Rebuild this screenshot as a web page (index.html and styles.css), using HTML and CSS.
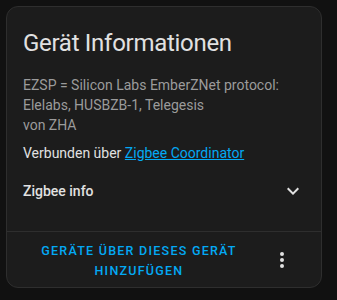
FILE: index.html
```html
<!DOCTYPE html>
<html lang="de">
<head>
  <meta charset="UTF-8">
  <meta name="viewport" content="width=device-width, initial-scale=1.0">
  <link rel="stylesheet" href="styles.css">
  <title>Gerät Informationen</title>
</head>
<body>
  <div class="card">
    <h1 class="card-header">Gerät Informationen</h1>

    <div class="card-content">
      <div class="model">EZSP = Silicon Labs EmberZNet protocol: Elelabs, HUSBZB-1, Telegesis</div>
      <div class="manuf">von ZHA</div>
      <div class="via">Verbunden über <a href="#">Zigbee Coordinator</a></div>

      <div class="panel">
        <span class="panel-title">Zigbee info</span>
        <svg class="icon" viewBox="0 0 24 24"><path d="M7.41,8.58L12,13.17L16.59,8.58L18,10L12,16L6,10L7.41,8.58Z"/></svg>
      </div>
    </div>

    <div class="card-actions">
      <button class="btn">Geräte über dieses Gerät hinzufügen</button>
      <button class="icon-btn">
        <svg class="icon" viewBox="0 0 24 24"><path d="M12,16A2,2 0 0,1 14,18A2,2 0 0,1 12,20A2,2 0 0,1 10,18A2,2 0 0,1 12,16M12,10A2,2 0 0,1 14,12A2,2 0 0,1 12,14A2,2 0 0,1 10,12A2,2 0 0,1 12,10M12,4A2,2 0 0,1 14,6A2,2 0 0,1 12,8A2,2 0 0,1 10,6A2,2 0 0,1 12,4Z"/></svg>
      </button>
    </div>
  </div>
</body>
</html>
```

FILE: styles.css
```css
body {
  font-family: Roboto, "Noto Sans", sans-serif;
  background-color: #111111;
  margin: 6px;
}

.card {
  width: 316px;
  box-sizing: border-box;
  background-color: #1c1c1c;
  border: 1px solid #2e2e2e;
  border-radius: 12px;
  color: #e1e1e1;
}

.card-header {
  margin: 0;
  padding: 20px 16px 0;
  font-size: 24px;
  font-weight: 400;
  line-height: 32px;
  letter-spacing: -0.012em;
}

.card-content {
  padding: 16px;
  font-size: 14px;
  line-height: 20px;
}

.model,
.manuf {
  color: #9b9b9b;
}

.via {
  margin-top: 8px;
}

.via a {
  color: #03a9f4;
  text-decoration: underline;
}

.panel {
  display: flex;
  align-items: center;
  justify-content: space-between;
  height: 48px;
  margin-top: 4px;
}

.panel-title {
  font-weight: 500;
}

.icon {
  width: 24px;
  height: 24px;
  fill: #e1e1e1;
  display: block;
}

.card-actions {
  display: flex;
  align-items: center;
  height: 56px;
  padding: 3px 20px 0 8px;
  box-sizing: border-box;
  border-top: 1px solid #2e2e2e;
}

.btn {
  flex: 1;
  background: none;
  border: none;
  padding: 0 8px;
  font-family: inherit;
  font-size: 12.5px;
  font-weight: 500;
  line-height: 20px;
  letter-spacing: 0.1em;
  text-transform: uppercase;
  color: #03a9f4;
  text-align: center;
  cursor: pointer;
}

.icon-btn {
  width: 38px;
  height: 40px;
  margin-top: -3px;
  padding: 0;
  background: none;
  border: none;
  display: flex;
  align-items: center;
  justify-content: center;
}
```
